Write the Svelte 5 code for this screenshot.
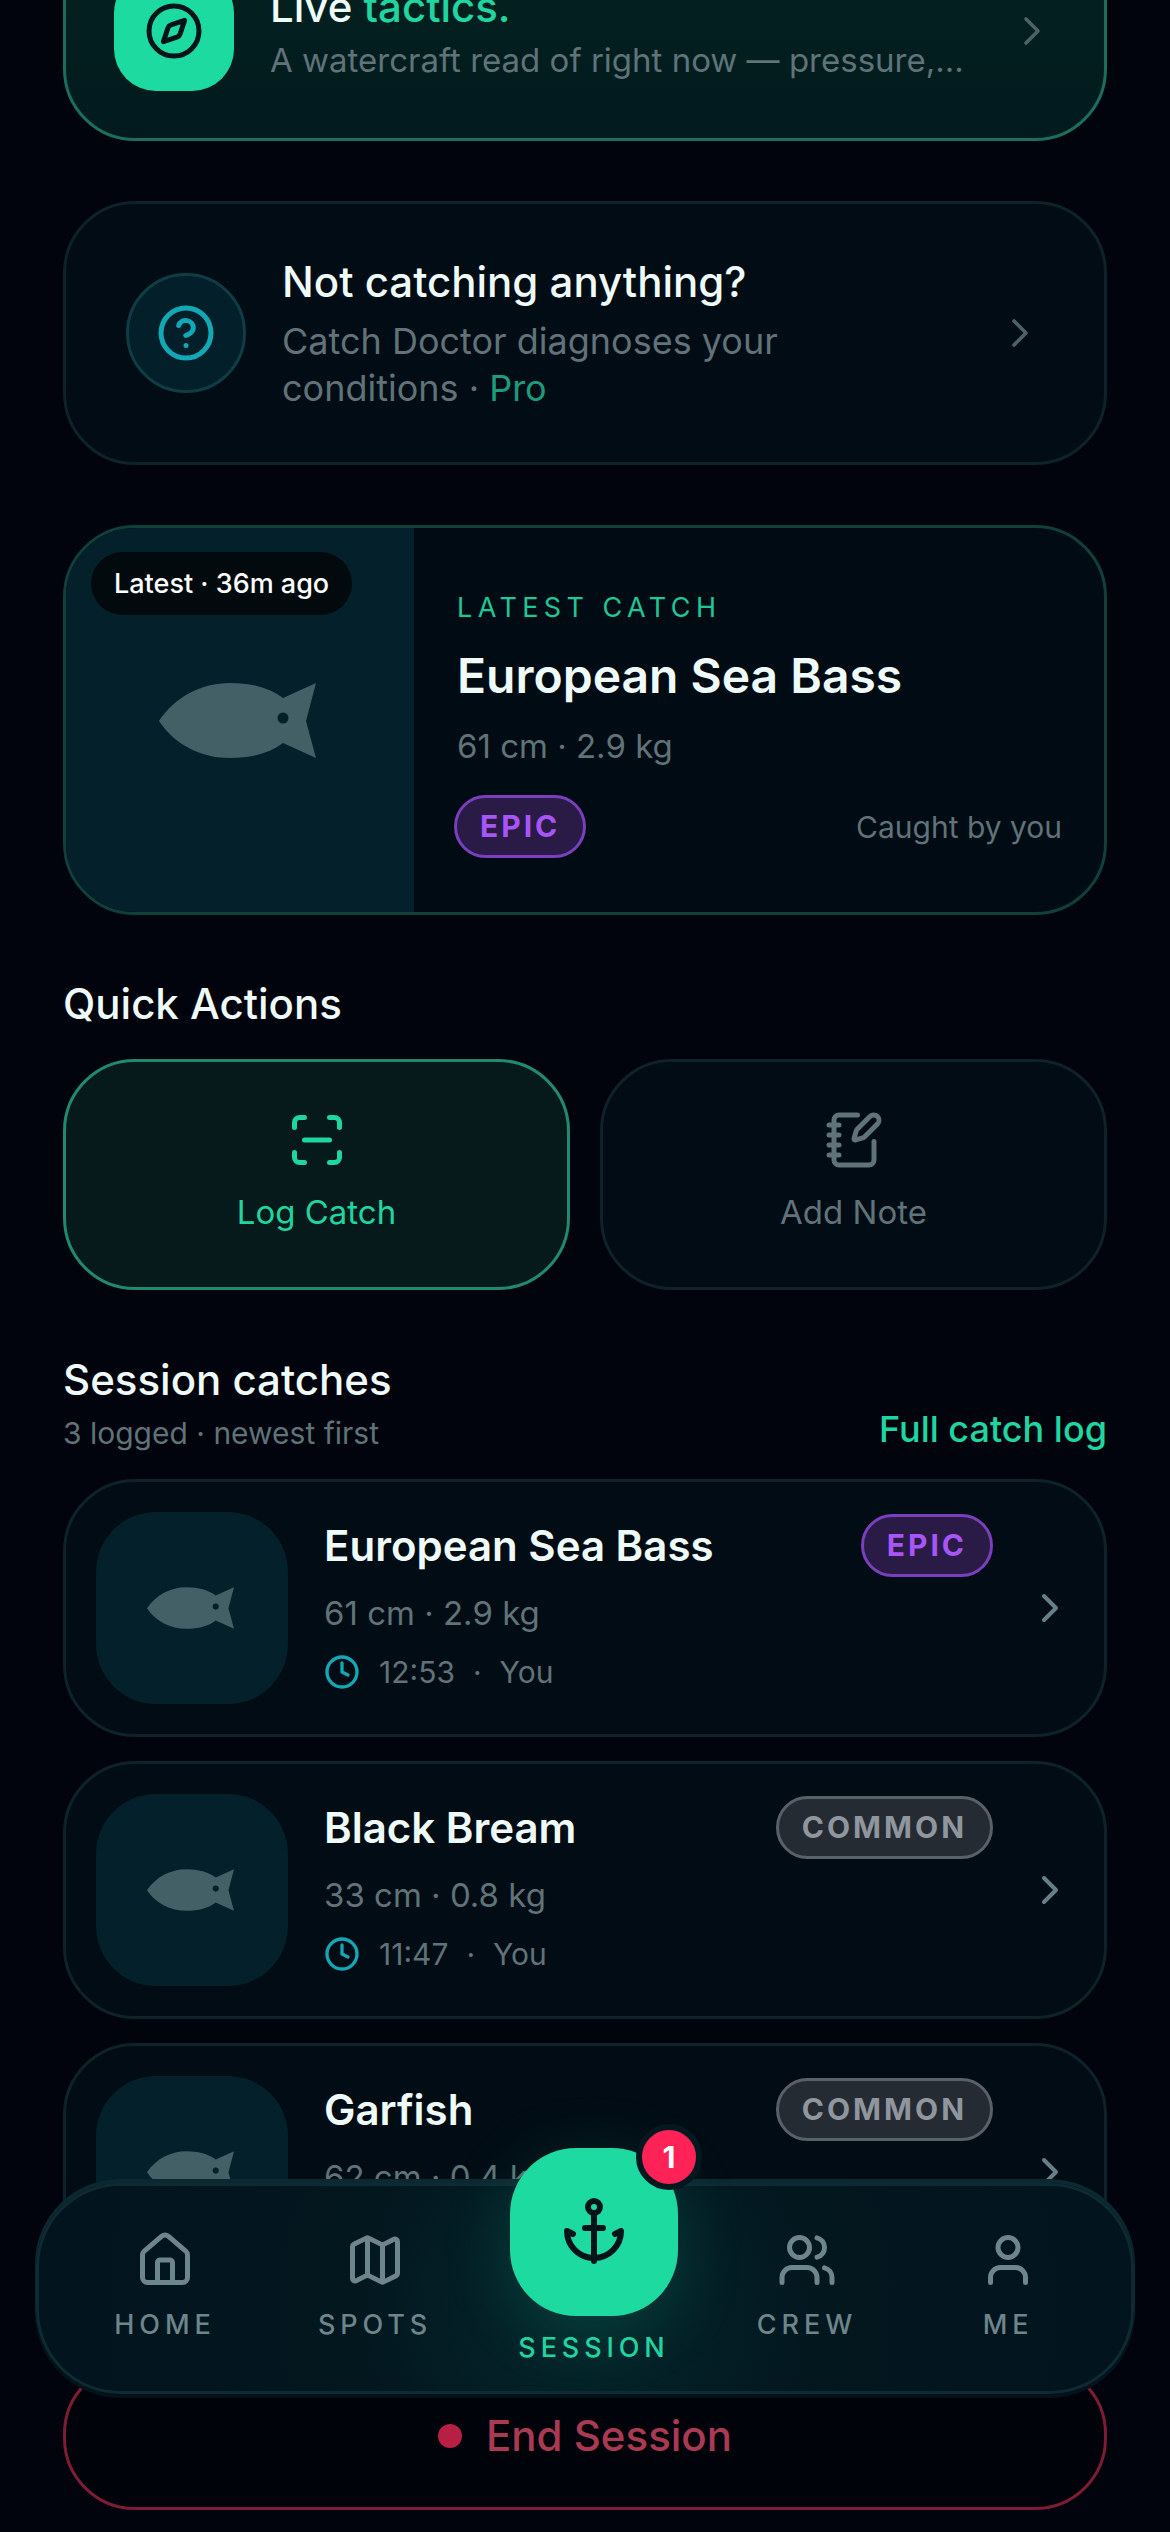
<script lang="ts">
	let catches = [
		{ name: "European Sea Bass", dims: "61 cm · 2.9 kg", time: "12:53", rarity: "epic" },
		{ name: "Black Bream", dims: "33 cm · 0.8 kg", time: "11:47", rarity: "common" },
		{ name: "Garfish", dims: "62 cm · 0.4 kg", time: "10:32", rarity: "common" }
	];

	let navLeft = [
		{ label: "HOME", icon: "home" },
		{ label: "SPOTS", icon: "map" }
	];
	let navRight = [
		{ label: "CREW", icon: "users" },
		{ label: "ME", icon: "user" }
	];
</script>

{#snippet fish(cls)}
	<svg class={cls} viewBox="0 0 157 75" aria-hidden="true">
		<path class="fish-body" d="M0 38C16 14 42 0 71 0c22 0 40 5 53 15L157 0l-10 38 10 37-33-15C111 70 93 75 71 75 42 75 16 62 0 38Z" />
		<circle class="fish-eye" cx="124" cy="35" r="5.5" />
	</svg>
{/snippet}

{#snippet chevron()}
	<svg class="chevron" viewBox="0 0 24 24" aria-hidden="true"><path d="m9 18 6-6-6-6" /></svg>
{/snippet}

{#snippet navIcon(name)}
	<svg class="nav-icon" viewBox="0 0 24 24" aria-hidden="true">
		{#if name === "home"}
			<path d="M15 21v-8a1 1 0 0 0-1-1h-4a1 1 0 0 0-1 1v8" />
			<path d="M3 10a2 2 0 0 1 .709-1.528l7-5.999a2 2 0 0 1 2.582 0l7 5.999A2 2 0 0 1 21 10v9a2 2 0 0 1-2 2H5a2 2 0 0 1-2-2z" />
		{:else if name === "map"}
			<path d="M14.106 5.553a2 2 0 0 0 1.788 0l3.659-1.83A1 1 0 0 1 21 4.619v12.764a1 1 0 0 1-.553.894l-4.553 2.277a2 2 0 0 1-1.788 0l-4.212-2.106a2 2 0 0 0-1.788 0l-3.659 1.83A1 1 0 0 1 3 19.381V6.618a1 1 0 0 1 .553-.894l4.553-2.277a2 2 0 0 1 1.788 0z" />
			<path d="M15 5.764v15" />
			<path d="M9 3.236v15" />
		{:else if name === "users"}
			<path d="M16 21v-2a4 4 0 0 0-4-4H6a4 4 0 0 0-4 4v2" />
			<circle cx="9" cy="7" r="4" />
			<path d="M22 21v-2a4 4 0 0 0-3-3.87" />
			<path d="M16 3.13a4 4 0 0 1 0 7.75" />
		{:else}
			<path d="M19 21v-2a4 4 0 0 0-4-4H9a4 4 0 0 0-4 4v2" />
			<circle cx="12" cy="7" r="4" />
		{/if}
	</svg>
{/snippet}

<div class="page">
	<div class="scroll">
		<section class="card tactics">
			<div class="tactics-icon">
				<svg viewBox="0 0 24 24" aria-hidden="true">
					<circle cx="12" cy="12" r="10" />
					<path d="m16.24 7.76-1.804 5.411a2 2 0 0 1-1.265 1.265L7.76 16.24l1.804-5.411a2 2 0 0 1 1.265-1.265z" />
				</svg>
			</div>
			<div class="tactics-text">
				<h2>Live <span class="accent">tactics.</span></h2>
				<p>A watercraft read of right now — pressure,…</p>
			</div>
			{@render chevron()}
		</section>

		<section class="card doctor">
			<div class="doctor-icon">
				<svg viewBox="0 0 24 24" aria-hidden="true">
					<circle cx="12" cy="12" r="10" />
					<path d="M9.09 9a3 3 0 0 1 5.83 1c0 2-3 3-3 3" />
					<path d="M12 17h.01" />
				</svg>
			</div>
			<div class="doctor-text">
				<h2>Not catching anything?</h2>
				<p>Catch Doctor diagnoses your conditions · <span class="pro">Pro</span></p>
			</div>
			{@render chevron()}
		</section>

		<section class="card hero">
			<div class="hero-pane">
				<span class="pill">Latest · 36m ago</span>
				{@render fish("fish-lg")}
			</div>
			<div class="hero-info">
				<span class="eyebrow">LATEST CATCH</span>
				<h2>European Sea Bass</h2>
				<p class="dims">61 cm · 2.9 kg</p>
				<div class="hero-foot">
					<span class="badge epic">EPIC</span>
					<span class="caught">Caught by you</span>
				</div>
			</div>
		</section>

		<h3 class="heading">Quick Actions</h3>
		<div class="actions">
			<button class="action primary">
				<svg viewBox="0 0 24 24" aria-hidden="true">
					<path d="M3 7V5a2 2 0 0 1 2-2h2" />
					<path d="M17 3h2a2 2 0 0 1 2 2v2" />
					<path d="M21 17v2a2 2 0 0 1-2 2h-2" />
					<path d="M7 21H5a2 2 0 0 1-2-2v-2" />
					<path d="M7 12h10" />
				</svg>
				Log Catch
			</button>
			<button class="action">
				<svg viewBox="0 0 24 24" aria-hidden="true">
					<path d="M13.4 2H6a2 2 0 0 0-2 2v16a2 2 0 0 0 2 2h12a2 2 0 0 0 2-2v-7.4" />
					<path d="M2 6h4" />
					<path d="M2 10h4" />
					<path d="M2 14h4" />
					<path d="M2 18h4" />
					<path d="M21.378 5.626a1 1 0 1 0-3.004-3.004l-5.01 5.012a2 2 0 0 0-.506.854l-.837 2.87a.5.5 0 0 0 .62.62l2.87-.837a2 2 0 0 0 .854-.506z" />
				</svg>
				Add Note
			</button>
		</div>

		<div class="list-head">
			<div>
				<h3 class="heading flush">Session catches</h3>
				<p class="list-sub">3 logged · newest first</p>
			</div>
			<span class="full-log">Full catch log</span>
		</div>

		<div class="list">
			{#each catches as c}
				<article class="card row">
					<div class="thumb">{@render fish("fish-sm")}</div>
					<div class="row-info">
						<div class="row-top">
							<h4>{c.name}</h4>
							<span class="badge {c.rarity}">{c.rarity.toUpperCase()}</span>
						</div>
						<p class="dims">{c.dims}</p>
						<p class="when">
							<svg viewBox="0 0 24 24" aria-hidden="true">
								<circle cx="12" cy="12" r="10" />
								<path d="M12 6v6l4 2" />
							</svg>
							<span>{c.time}</span><span>·</span><span>You</span>
						</p>
					</div>
					{@render chevron()}
				</article>
			{/each}
		</div>

		<button class="end"><i></i>End Session</button>
	</div>

	<nav class="nav">
		{#each navLeft as item}
			<div class="nav-item">
				{@render navIcon(item.icon)}
				<span>{item.label}</span>
			</div>
		{/each}
		<div class="nav-item active">
			<div class="fab">
				<svg viewBox="0 0 24 24" aria-hidden="true">
					<path d="M12 6v16" />
					<path d="m19 13 2-1a9 9 0 0 1-18 0l2 1" />
					<path d="M9 11h6" />
					<circle cx="12" cy="4" r="2" />
				</svg>
				<b class="count">1</b>
			</div>
			<span>SESSION</span>
		</div>
		{#each navRight as item}
			<div class="nav-item">
				{@render navIcon(item.icon)}
				<span>{item.label}</span>
			</div>
		{/each}
	</nav>
</div>

<style>
	:global(body) {
		background: #01030d;
	}

	.page {
		position: relative;
		height: 2532px;
		overflow: hidden;
		background: #01030d;
		font-family: Inter, "Liberation Sans", sans-serif;
		color: #eefbf8;
	}

	.scroll {
		padding: 0 63px;
	}

	h2, h3, h4, p {
		margin: 0;
	}

	svg {
		fill: none;
		stroke: currentColor;
		stroke-width: 2;
		stroke-linecap: round;
		stroke-linejoin: round;
		flex: none;
	}

	.card {
		display: flex;
		align-items: center;
		box-sizing: border-box;
		border: 3px solid #0d2329;
		border-radius: 72px;
		background: #020c14;
	}

	.chevron {
		width: 48px;
		height: 48px;
		color: #4d6268;
		stroke-width: 1.8;
	}

	.row .chevron {
		color: #66808a;
		stroke-width: 2;
	}

	/* first card is scrolled partly off the top */
	.tactics {
		margin-top: -80px;
		height: 221px;
		padding: 0 48px;
		border-color: #1b6e5d;
		background: linear-gradient(180deg, #03231f, #021a1e);
	}

	.tactics-icon {
		width: 120px;
		height: 120px;
		border-radius: 42px;
		background: #1ddba0;
		color: #02141a;
		display: flex;
		align-items: center;
		justify-content: center;
	}

	.tactics-icon svg {
		width: 60px;
		height: 60px;
	}

	.tactics-text {
		flex: 1;
		margin-left: 36px;
	}

	.tactics-text h2 {
		font-size: 42px;
		line-height: 54px;
		font-weight: 500;
	}

	.tactics-text p {
		margin-top: 5px;
		font-size: 33px;
		line-height: 42px;
		color: #5f7378;
		white-space: nowrap;
	}

	.accent {
		color: #1fd6a0;
	}

	.doctor {
		margin-top: 60px;
		height: 264px;
		padding: 0 60px;
	}

	.doctor-icon {
		width: 120px;
		height: 120px;
		box-sizing: border-box;
		border: 3px solid #0f3c45;
		border-radius: 50%;
		background: #031f2a;
		color: #12a8b5;
		display: flex;
		align-items: center;
		justify-content: center;
	}

	.doctor-icon svg {
		width: 60px;
		height: 60px;
	}

	.doctor-text {
		flex: 1;
		margin-left: 36px;
		padding-bottom: 3px;
	}

	.doctor-text h2 {
		font-size: 42px;
		line-height: 60px;
		font-weight: 500;
	}

	.doctor-text p {
		margin-top: 6px;
		max-width: 620px;
		font-size: 36px;
		line-height: 47px;
		color: #5f7378;
	}

	.pro {
		color: #1c9c7d;
	}

	.hero {
		margin-top: 60px;
		height: 390px;
		align-items: stretch;
		overflow: hidden;
		border-color: #103f3c;
		background: #010b13;
	}

	.hero-pane {
		position: relative;
		width: 348px;
		flex: none;
		background: #03202b;
		display: flex;
		align-items: center;
		justify-content: center;
	}

	.pill {
		position: absolute;
		left: 25px;
		top: 24px;
		height: 63px;
		padding: 0 23px;
		border-radius: 32px;
		background: #020a0d;
		color: #fff;
		font-size: 27px;
		font-weight: 500;
		line-height: 63px;
		white-space: nowrap;
	}

	.fish-lg {
		width: 157px;
		height: 75px;
		margin-right: 6px;
	}

	.fish-sm {
		width: 87px;
		height: 42px;
		margin-right: 4px;
	}

	.fish-body {
		fill: #426065;
		stroke: none;
	}

	.fish-eye {
		fill: #03202b;
		stroke: none;
	}

	.hero-info {
		flex: 1;
		display: flex;
		flex-direction: column;
		justify-content: center;
		padding: 8px 42px 0 40px;
	}

	.eyebrow {
		padding-left: 3px;
		font-size: 27px;
		line-height: 36px;
		letter-spacing: 5.4px;
		color: #1fc797;
	}

	.hero-info h2 {
		margin-top: 20px;
		padding-left: 3px;
		font-size: 48px;
		line-height: 60px;
		font-weight: 600;
	}

	.dims {
		font-size: 33px;
		line-height: 45px;
		color: #5f7378;
	}

	.hero-info .dims {
		margin-top: 18px;
		padding-left: 3px;
	}

	.hero-foot {
		margin-top: 26px;
		display: flex;
		align-items: center;
		justify-content: space-between;
	}

	.caught {
		font-size: 30px;
		color: #5f7378;
	}

	.badge {
		box-sizing: border-box;
		height: 63px;
		padding: 0 23px;
		border: 3px solid;
		border-radius: 32px;
		font-size: 30px;
		font-weight: 700;
		line-height: 57px;
		letter-spacing: 3px;
	}

	.epic {
		border-color: #7a3fbd;
		background: #2a1a46;
		color: #a855f7;
	}

	.common {
		border-color: #5a6068;
		background: #252b33;
		color: #8f969e;
	}

	.heading {
		margin-top: 59px;
		font-size: 42px;
		line-height: 60px;
		font-weight: 500;
	}

	.flush {
		margin-top: 0;
	}

	.actions {
		margin-top: 25px;
		display: grid;
		grid-template-columns: 1fr 1fr;
		gap: 30px;
	}

	.action {
		box-sizing: border-box;
		height: 231px;
		display: flex;
		flex-direction: column;
		align-items: center;
		justify-content: flex-start;
		padding: 48px 0 0;
		border: 3px solid #0f2229;
		border-radius: 72px;
		background: #020c14;
		color: #5f7378;
		font: 400 33px/42px Inter, "Liberation Sans", sans-serif;
	}

	.action svg {
		width: 60px;
		height: 60px;
		margin-bottom: 21px;
	}

	.primary {
		border-color: #1f8a6e;
		background: #06191b;
		color: #1fd6a0;
	}

	.list-head {
		margin-top: 60px;
		display: flex;
		justify-content: space-between;
		align-items: flex-end;
	}

	.list-sub {
		margin-top: 2px;
		font-size: 30px;
		line-height: 42px;
		color: #5f7378;
	}

	.full-log {
		padding-bottom: 3px;
		font-size: 36px;
		line-height: 44px;
		font-weight: 500;
		color: #1fd6a0;
	}

	.list {
		margin-top: 25px;
		display: flex;
		flex-direction: column;
		gap: 24px;
	}

	.row {
		height: 258px;
		padding: 0 30px;
		flex: none;
	}

	.thumb {
		width: 192px;
		height: 192px;
		flex: none;
		border-radius: 60px;
		background: #03202b;
		display: flex;
		align-items: center;
		justify-content: center;
	}

	.row-info {
		flex: 1;
		min-width: 0;
		margin: 0 33px 0 36px;
		padding-bottom: 10px;
	}

	.row-top {
		display: flex;
		align-items: center;
		justify-content: space-between;
	}

	.row-top h4 {
		font-size: 42px;
		line-height: 63px;
		font-weight: 600;
	}

	.row-info .dims {
		margin-top: 14px;
	}

	.when {
		margin-top: 15px;
		display: flex;
		align-items: center;
		gap: 18px;
		font-size: 30px;
		line-height: 42px;
		color: #5f7378;
	}

	.when svg {
		width: 36px;
		height: 36px;
		color: #12a8b5;
		stroke-width: 2.2;
		margin-right: 1px;
	}

	.end {
		margin-top: 61px;
		box-sizing: border-box;
		width: 100%;
		height: 148px;
		display: flex;
		align-items: center;
		justify-content: center;
		gap: 24px;
		border: 3px solid #7d1c35;
		border-radius: 72px;
		background: #01030a;
		color: #a93a52;
		font: 500 42px/60px Inter, "Liberation Sans", sans-serif;
	}

	.end i {
		width: 24px;
		height: 24px;
		border-radius: 50%;
		background: #b81f45;
	}

	.nav {
		position: absolute;
		left: 36px;
		top: 2183px;
		width: 1098px;
		height: 211px;
		box-sizing: border-box;
		padding: 44px 0 0 26px;
		display: grid;
		grid-template-columns: 200px 220px 218px 208px 194px;
		align-items: start;
		border: 3px solid #0e2a32;
		border-radius: 84px;
		background: radial-gradient(circle at 50% 60%, #04272c, #03171f 40%, #02141d);
		box-shadow: 0 -3px 0 1px #0c2830, 0 3px 0 1px #04121a;
	}

	.nav-item {
		display: flex;
		flex-direction: column;
		align-items: center;
		color: #6d858c;
	}

	.nav-icon {
		width: 60px;
		height: 60px;
	}

	.nav-item span {
		margin-top: 18px;
		font-size: 27px;
		line-height: 33px;
		font-weight: 500;
		letter-spacing: 4.9px;
	}

	.active {
		margin-top: -82px;
		color: #1fd6a0;
	}

	.active span {
		margin-top: 15px;
	}

	.fab {
		position: relative;
		width: 168px;
		height: 168px;
		border-radius: 66px;
		background: #1ddba0;
		color: #02141a;
		box-shadow: 0 12px 70px rgba(29, 219, 160, 0.16);
		display: flex;
		align-items: center;
		justify-content: center;
	}

	.fab svg {
		width: 72px;
		height: 72px;
		margin-top: -3px;
	}

	.count {
		position: absolute;
		top: -24px;
		right: -24px;
		box-sizing: border-box;
		width: 66px;
		height: 66px;
		border: 6px solid #03181f;
		border-radius: 50%;
		background: #ff2257;
		color: #fff;
		font-size: 30px;
		font-weight: 700;
		line-height: 54px;
		text-align: center;
	}
</style>
